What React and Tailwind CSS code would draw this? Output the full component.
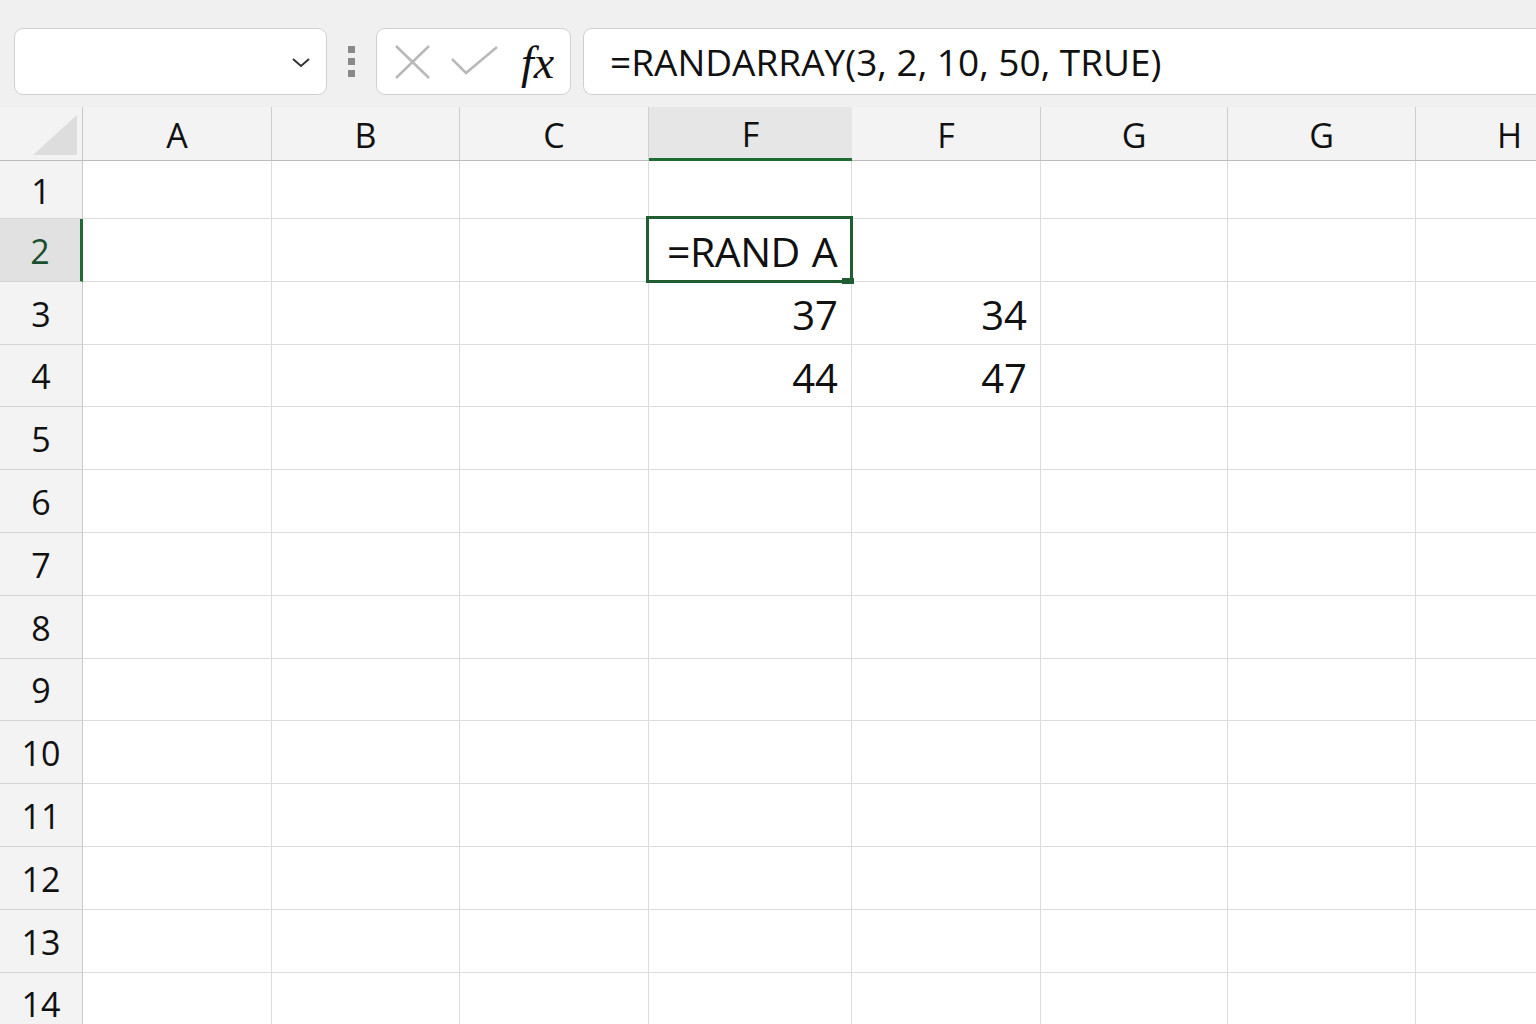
import React from 'react';

const FONT = { fontFamily: '"Open Sans", "Noto Sans", sans-serif' };

// column layout: row header + 8 visible columns
const COLS = [
  { label: 'A', w: 'w-[189px]' },
  { label: 'B', w: 'w-[188px]' },
  { label: 'C', w: 'w-[189px]' },
  { label: 'F', w: 'w-[203px]', selected: true },
  { label: 'F', w: 'w-[189px]' },
  { label: 'G', w: 'w-[187px]' },
  { label: 'G', w: 'w-[188px]' },
  { label: 'H', w: 'w-[188px]' },
];

const ROWS = [1, 2, 3, 4, 5, 6, 7, 8, 9, 10, 11, 12, 13, 14];

const VALUES = {
  '3-3': '37',
  '3-4': '34',
  '4-3': '44',
  '4-4': '47',
};

const Toolbar = () => (
  <div className="h-[107px] bg-[#f0f0f0] flex items-start pt-[28px] pl-[14px] gap-0 shrink-0">
    {/* name box */}
    <div className="w-[313px] h-[67px] shrink-0 bg-white border border-[#d0d0d0] rounded-[9px] flex items-center justify-end pr-[14px]">
      <svg width="22" height="14" viewBox="0 0 22 14" fill="none">
        <path d="M3 4 L11 11 L19 4" stroke="#333" strokeWidth="2" />
      </svg>
    </div>
    {/* grip dots */}
    <div className="w-[49px] h-[67px] shrink-0 flex flex-col items-center justify-center gap-[5px]">
      <div className="w-[7px] h-[7px] bg-[#8a8a8a]" />
      <div className="w-[7px] h-[7px] bg-[#8a8a8a]" />
      <div className="w-[7px] h-[7px] bg-[#8a8a8a]" />
    </div>
    {/* cancel / enter / fx */}
    <div className="w-[195px] h-[67px] shrink-0 bg-white border border-[#d0d0d0] rounded-[9px] flex items-center pl-[17px]">
      <svg width="38" height="38" viewBox="0 0 38 38" fill="none">
        <path d="M2 3 L35 35 M35 3 L2 35" stroke="#b8b8b8" strokeWidth="2.5" />
      </svg>
      <svg width="50" height="34" viewBox="0 0 50 34" fill="none" className="ml-[19px]">
        <path d="M1 14 L15 28 L46 2" stroke="#b8b8b8" strokeWidth="2.5" />
      </svg>
      <span
        className="ml-[20px] text-[46px] leading-none italic text-[#111] mt-[2px]"
        style={{ fontFamily: '"Liberation Serif", "DejaVu Serif", serif' }}
      >
        fx
      </span>
    </div>
    {/* formula bar */}
    <div className="ml-[12px] flex-1 h-[67px] bg-white border border-r-0 border-[#d0d0d0] rounded-l-[9px] flex items-center pl-[26px]">
      <span className="text-[37px] text-[#111] leading-none" style={FONT}>
        =RANDARRAY(3, 2, 10, 50, TRUE)
      </span>
    </div>
  </div>
);

const HeaderRow = () => (
  <div className="flex h-[54px] shrink-0 bg-[#f3f3f3] border-b border-[#bcbcbc]">
    <div className="w-[83px] shrink-0 border-r border-[#c8c8c8] relative">
      <div className="absolute right-[5px] bottom-[5px] w-0 h-0 border-l-[44px] border-l-transparent border-b-[40px] border-b-[#dddddd]" />
    </div>
    {COLS.map((c, i) => (
      <div
        key={i}
        className={`${c.w} shrink-0 flex items-center justify-center pt-[3px] text-[34px] text-[#111] ${
          c.selected ? 'bg-[#e6e6e6] border-b-[3px] border-[#1e6b34] -mb-px' : 'border-r border-[#cfcfcf]'
        }`}
        style={FONT}
      >
        {c.label}
      </div>
    ))}
  </div>
);

const GridRow = ({ n }) => {
  const isSel = n === 2;
  const h = n === 1 ? 'h-[58px]' : 'h-[62.8px]';
  return (
    <div className={`flex ${h} shrink-0`}>
      <div
        className={`w-[83px] shrink-0 flex items-center justify-center pt-[3px] text-[34px] border-b border-[#d4d4d4] ${
          isSel
            ? 'bg-[#e1e1e1] text-[#1a4f2e] border-r-[3px] border-r-[#1e6b34]'
            : 'bg-[#f3f3f3] text-[#111] border-r border-r-[#c8c8c8]'
        }`}
        style={FONT}
      >
        {n}
      </div>
      {COLS.map((c, i) => {
        const val = VALUES[`${n}-${i}`];
        const active = isSel && i === 3;
        return (
          <div
            key={i}
            className={`${c.w} shrink-0 relative bg-white border-r border-b border-[#dcdcdc] flex items-center justify-end pr-[13px] pt-[4px] text-[40px] text-[#111]`}
            style={FONT}
          >
            {val}
            {active && (
              <div className="absolute -left-[3px] -top-[3px] -right-[2px] -bottom-[2px] border-[3px] border-[#1e5e31] flex items-center pl-[18px] pt-[4px] z-10">
                <span className="leading-none text-[41px] text-[#111] tracking-[-0.5px]">
                  =RAND<span className="ml-[12px]">A</span>
                </span>
                <div className="absolute -right-[4px] -bottom-[4px] w-[12px] h-[6px] bg-[#1e5e31]" />
              </div>
            )}
          </div>
        );
      })}
    </div>
  );
};

export default function App() {
  return (
    <div className="w-[1536px] h-[1024px] overflow-hidden bg-white flex flex-col">
      <Toolbar />
      <HeaderRow />
      {ROWS.map((n) => (
        <GridRow key={n} n={n} />
      ))}
    </div>
  );
}
